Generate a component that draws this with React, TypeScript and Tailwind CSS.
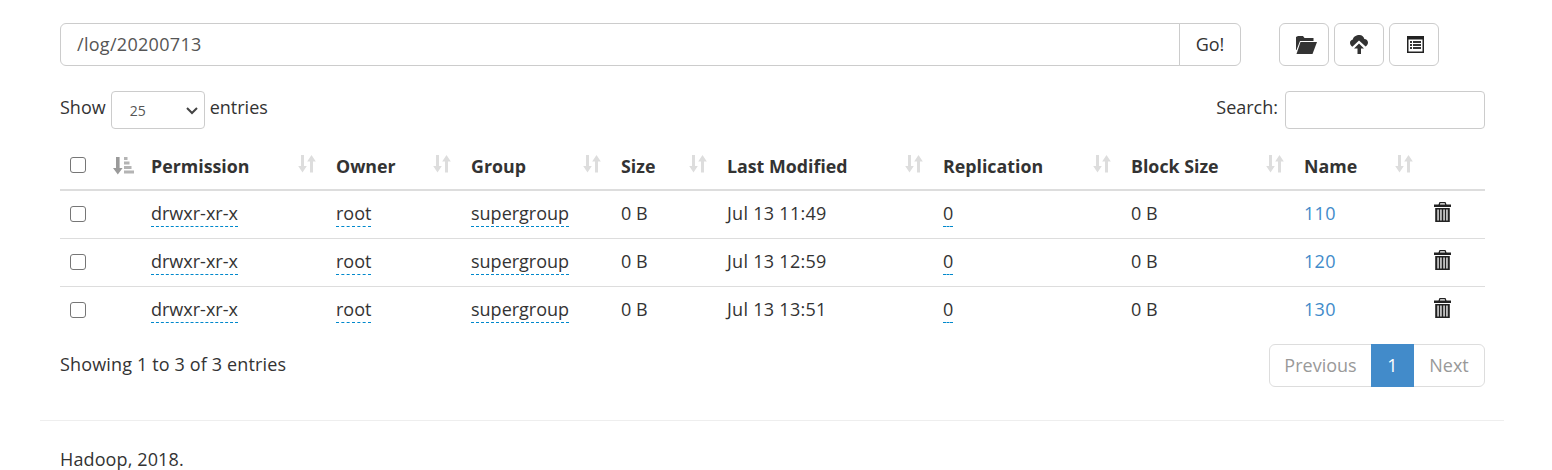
const font = { fontFamily: '"Open Sans", "Noto Sans", sans-serif' };

function SortIcon() {
  return (
    <svg width="18" height="18" viewBox="0 0 18 18" className="absolute right-[12px] top-[13px] text-[#dddddd]" fill="currentColor">
      <path d="M3 0h3v11h2.800L4.500 17.500.2 11H3z" />
      <path d="M13.500 0l4.300 6.500H15V17.500h-3V6.500H9.200z" />
    </svg>
  );
}

function SortActive() {
  return (
    <svg width="21" height="18" viewBox="0 0 21 18">
      <path fill="#9a9a9a" d="M3 0h3.600v11H9.600L4.800 17.500 0 11H3z" />
      <path fill="#b4b4b4" d="M11 0h3.500v3H11zM11 4.500h5.500v3H11zM11 9h7.500v3H11zM11 13.500h10v3H11z" />
    </svg>
  );
}

function Trash() {
  return (
    <svg width="17" height="20" viewBox="0 0 17 20" fill="#222">
      <path d="M5.500 0h6l1 2.500H17V5H0V2.500h4.500zM6.300 1.200 5.900 2.500h5.200l-.4-1.300z" fillRule="evenodd" />
      <path fillRule="evenodd" d="M1.200 6h14.600v14H1.200zM3.400 7.500v11h1.300v-11zM6.300 7.500v11h1.300v-11zM9.400 7.500v11h1.300v-11zM12.300 7.500v11h1.300v-11z" />
    </svg>
  );
}

function Check() {
  return <span className="block w-4 h-4 rounded-[3px] border border-[#767676] bg-white" />;
}

function Editable({ children }: { children: string }) {
  return <span className="border-b border-dashed border-b-[#0088cc] pb-[1px]">{children}</span>;
}

const headers = [
  { t: "Permission", w: "w-[185px]" },
  { t: "Owner", w: "w-[135px]" },
  { t: "Group", w: "w-[150px]" },
  { t: "Size", w: "w-[106px]" },
  { t: "Last Modified", w: "w-[216px]" },
  { t: "Replication", w: "w-[188px]" },
  { t: "Block Size", w: "w-[173px]" },
  { t: "Name", w: "w-[129px]" },
];

const rows = [
  { m: "Jul 13 11:49", n: "110" },
  { m: "Jul 13 12:59", n: "120" },
  { m: "Jul 13 13:51", n: "130" },
];

export default function App() {
  return (
    <div style={font} className="h-[470px] overflow-hidden bg-white text-[#333] text-[18px] leading-[25px] pt-[23px]">
      <div className="pl-[60px] pr-[67px]">
        <div className="flex h-[43px]">
          <div className="flex w-[1181px]">
            <div className="flex-1 flex items-center pl-[16px] border border-[#ccc] rounded-l-[6px] text-[#555] tracking-[0.3px]">/log/20200713</div>
            <div className="w-[62px] -ml-px flex items-center justify-center border border-[#ccc] rounded-r-[6px]">Go!</div>
          </div>
          <div className="flex gap-[5px] ml-[38px]">
            <div className="w-[50px] pl-[3px] flex items-center justify-center border border-[#ccc] rounded-[6px]">
              <svg width="22" height="18" viewBox="0 0 22 18" fill="#333">
                <path d="M1 1 3 0H8L9.500 2H18.500V5H5L1.500 14H1z" />
                <path d="M5.500 6H22L17.500 18H1.500z" />
              </svg>
            </div>
            <div className="w-[50px] flex items-center justify-center border border-[#ccc] rounded-[6px]">
              <svg width="18" height="19" viewBox="0 0 18 19" fill="#333">
                <path d="M9.500 0C12 0 14 1.700 14.300 4 16.400 4 18 5.600 18 7.600 18 9.300 17 10.800 15.600 11.500L9 5.500 2.400 11.700C1 11 0 9.300 0 7.700 0 6 1.200 4.700 2.800 4.400 3.400 1.800 6.200 0 9.500 0z" />
                <path d="M9 8.500 14 13.500H11V19H7.500V13.500H4z" />
              </svg>
            </div>
            <div className="w-[50px] pl-[2px] pb-[1px] flex items-center justify-center border border-[#ccc] rounded-[6px]">
              <svg width="17" height="17" viewBox="0 0 17 17">
                <path fill="#222" fillRule="evenodd" d="M0 0h17v17H0zM1.500 3.500V15.500h14V3.500z" />
                <path fill="#333" d="M3 5h2v2H3zM6 5h8v2H6zM3 8h2v2H3zM6 8h8v2H6zM3 11h2v2H3zM6 11h8v2H6z" />
              </svg>
            </div>
          </div>
        </div>

        <div className="flex justify-between mt-[25px] h-[38px]">
          <div className="flex items-center">
            <span className="-mt-[6px]">Show</span>
            <div className="w-[94px] h-[38px] ml-[5px] mr-[5px] flex items-center justify-between pl-[18px] pr-[4px] border border-[#ccc] rounded-[4px] text-[14px] text-[#555]">
              <span className="mt-[1px]">25</span>
              <svg width="16" height="16" viewBox="0 0 16 16" fill="none" stroke="#444" strokeWidth="2"><path d="M3 6l5 5 5-5" /></svg>
            </div>
            <span className="-mt-[6px]">entries</span>
          </div>
          <div className="flex items-center">
            <span className="-mt-[6px] mr-[7px]">Search:</span>
            <div className="w-[200px] h-[38px] border border-[#ccc] rounded-[4px]" />
          </div>
        </div>

        <table className="table-fixed w-[1425px] mt-[13px] border-collapse">
          <thead>
            <tr className="h-[48px] border-b-2 border-[#ddd]">
              <th className="w-[45px] p-0 pl-[10px] text-left align-middle"><div className="mt-[-1px]"><Check /></div></th>
              <th className="w-[38px] p-0 pl-[8px] text-left align-middle"><SortActive /></th>
              {headers.map((h) => (
                <th key={h.t} className={`${h.w} relative p-0 pl-[8px] pt-[2px] text-left font-bold text-[17.8px] align-middle`}>
                  <span className="whitespace-nowrap">{h.t}</span>
                  <SortIcon />
                </th>
              ))}
              <th className="w-[60px] p-0" />
            </tr>
          </thead>
          <tbody>
            {rows.map((r, i) => (
              <tr key={r.n} className={`h-[48px] ${i < 2 ? "border-b border-[#ddd]" : ""}`}>
                <td className="p-0 pl-[10px]"><div className="mt-[-1px]"><Check /></div></td>
                <td className="p-0" />
                <td className="p-0 pl-[8px] pb-[2px]"><Editable>drwxr-xr-x</Editable></td>
                <td className="p-0 pl-[8px] pb-[2px]"><Editable>root</Editable></td>
                <td className="p-0 pl-[8px] pb-[2px]"><Editable>supergroup</Editable></td>
                <td className="p-0 pl-[8px] pb-[2px]">0 B</td>
                <td className="p-0 pl-[8px] pb-[2px] tracking-[0.28px]">{r.m}</td>
                <td className="p-0 pl-[8px] pb-[2px]"><Editable>0</Editable></td>
                <td className="p-0 pl-[8px] pb-[2px]">0 B</td>
                <td className="p-0 pl-[8px] pb-[2px] text-[#428bca] tracking-[0.3px]">{r.n}</td>
                <td className="p-0 pl-[9px]"><div className="-mt-[5px]"><Trash /></div></td>
              </tr>
            ))}
          </tbody>
        </table>

        <div className="flex justify-between items-start mt-[10px]">
          <span className="mt-[8px] tracking-[0.15px]">Showing 1 to 3 of 3 entries</span>
          <div className="flex h-[43px] border border-[#ddd] rounded-[6px]">
            <span className="w-[101px] flex items-center justify-center text-[#999]">Previous</span>
            <span className="w-[43px] -my-px flex items-center justify-center bg-[#428bca] text-white">1</span>
            <span className="w-[70px] flex items-center justify-center text-[#999]">Next</span>
          </div>
        </div>
      </div>

      <div className="ml-[40px] mr-[48px] mt-[33px] border-t border-[#eee] pt-[26px] pl-[20px] tracking-[0.12px]">Hadoop, 2018.</div>
    </div>
  );
}
